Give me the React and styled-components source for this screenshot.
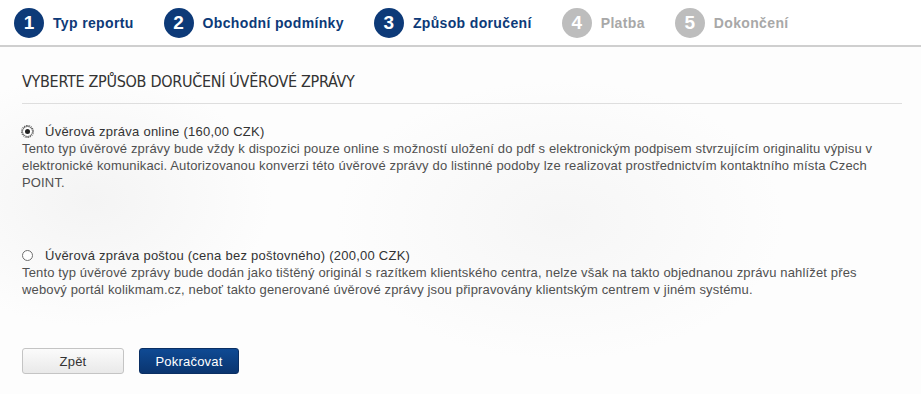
import React, { useState } from 'react'
import styled, { createGlobalStyle } from 'styled-components'

const GlobalStyle = createGlobalStyle`
  html, body {
    margin: 0;
    padding: 0;
    background: #ffffff;
  }
  body {
    font-family: "Liberation Sans", Arial, sans-serif;
    color: #555;
  }
`

const Page = styled.div`
  width: 921px;
  height: 394px;
  overflow: hidden;
  background:
    radial-gradient(ellipse 260px 180px at 90px 200px, rgba(240,240,240,0.7), rgba(255,255,255,0) 70%),
    radial-gradient(ellipse 320px 200px at 560px 220px, rgba(244,244,244,0.8), rgba(255,255,255,0) 70%),
    #fdfdfd;
`

const Steps = styled.div`
  display: flex;
  align-items: center;
  gap: 30px;
  height: 45px;
  padding-left: 14px;
  border-bottom: 2px solid #cfcfcf;
  background: #fff;
`

const Step = styled.div`
  display: flex;
  align-items: center;
  gap: 9px;
  font-size: 14px;
  font-weight: bold;
  letter-spacing: 0.35px;
  color: ${p => (p.$active ? '#0d3a78' : '#a8a8a8')};
`

const StepNumber = styled.span`
  width: 30px;
  height: 30px;
  border-radius: 50%;
  display: flex;
  align-items: center;
  justify-content: center;
  background: ${p => (p.$active ? '#0d3a78' : '#bdbdbd')};
  color: #fff;
  font-size: 19px;
  font-weight: bold;
  letter-spacing: 0;
`

const Content = styled.div`
  padding: 0 19px 0 22px;
`

const Heading = styled.h1`
  margin: 0;
  padding: 25px 0 12px;
  font-family: "DejaVu Sans Condensed", "Liberation Sans", sans-serif;
  font-size: 16px;
  letter-spacing: -0.3px;
  font-weight: normal;
  color: #333;
  border-bottom: 1px solid #dedede;
`

const Options = styled.div`
  display: flex;
  flex-direction: column;
  gap: 56px;
  padding-top: 19px;
`

const Option = styled.div`
  display: flex;
  flex-direction: column;
`

const OptionLabel = styled.label`
  display: flex;
  align-items: center;
  gap: 12px;
  font-size: 13px;
  line-height: 17px;
  letter-spacing: 0.25px;
  color: #333;
  cursor: pointer;
`

const Radio = styled.span`
  width: 11px;
  height: 11px;
  box-sizing: border-box;
  border-radius: 50%;
  border: 1px solid #6f6f6f;
  background: #fff;
  display: flex;
  align-items: center;
  justify-content: center;
  outline: ${p => (p.$checked ? '1px dotted #222' : 'none')};
  outline-offset: 0px;

  &::after {
    content: '';
    width: 5px;
    height: 5px;
    border-radius: 50%;
    background: ${p => (p.$checked ? '#222' : 'transparent')};
  }
`

const Description = styled.p`
  margin: 0;
  font-size: 13px;
  line-height: 17px;
  letter-spacing: 0.15px;
  color: #505050;
`

const Buttons = styled.div`
  display: flex;
  gap: 15px;
  padding-top: 50px;
`

const Button = styled.button`
  height: 26px;
  width: ${p => (p.$primary ? '100px' : '102px')};
  border-radius: 3px;
  font-family: inherit;
  font-size: 13px;
  letter-spacing: 0.2px;
  cursor: pointer;
  border: 1px solid ${p => (p.$primary ? '#0a2f63' : '#c4c4c4')};
  color: ${p => (p.$primary ? '#fff' : '#333')};
  background: ${p =>
    p.$primary
      ? 'linear-gradient(#0f4a94, #0a3570)'
      : 'linear-gradient(#fbfbfb, #e9e9e9)'};
`

const steps = [
  { n: 1, label: 'Typ reportu', active: true },
  { n: 2, label: 'Obchodní podmínky', active: true },
  { n: 3, label: 'Způsob doručení', active: true },
  { n: 4, label: 'Platba', active: false },
  { n: 5, label: 'Dokončení', active: false },
]

const options = [
  {
    id: 'online',
    label: 'Úvěrová zpráva online (160,00 CZK)',
    text: 'Tento typ úvěrové zprávy bude vždy k dispozici pouze online s možností uložení do pdf s elektronickým podpisem stvrzujícím originalitu výpisu v elektronické komunikaci. Autorizovanou konverzi této úvěrové zprávy do listinné podoby lze realizovat prostřednictvím kontaktního místa Czech POINT.',
  },
  {
    id: 'posta',
    label: 'Úvěrová zpráva poštou (cena bez poštovného) (200,00 CZK)',
    text: 'Tento typ úvěrové zprávy bude dodán jako tištěný originál s razítkem klientského centra, nelze však na takto objednanou zprávu nahlížet přes webový portál kolikmam.cz, neboť takto generované úvěrové zprávy jsou připravovány klientským centrem v jiném systému.',
  },
]

const App = () => {
  const [selected, setSelected] = useState('online')

  return (
    <Page>
      <GlobalStyle />
      <Steps>
        {steps.map(s => (
          <Step key={s.n} $active={s.active}>
            <StepNumber $active={s.active}>{s.n}</StepNumber>
            {s.label}
          </Step>
        ))}
      </Steps>
      <Content>
        <Heading>VYBERTE ZPŮSOB DORUČENÍ ÚVĚROVÉ ZPRÁVY</Heading>
        <Options>
          {options.map(o => (
            <Option key={o.id}>
              <OptionLabel onClick={() => setSelected(o.id)}>
                <Radio $checked={selected === o.id} />
                {o.label}
              </OptionLabel>
              <Description>{o.text}</Description>
            </Option>
          ))}
        </Options>
        <Buttons>
          <Button>Zpět</Button>
          <Button $primary>Pokračovat</Button>
        </Buttons>
      </Content>
    </Page>
  )
}

export default App
